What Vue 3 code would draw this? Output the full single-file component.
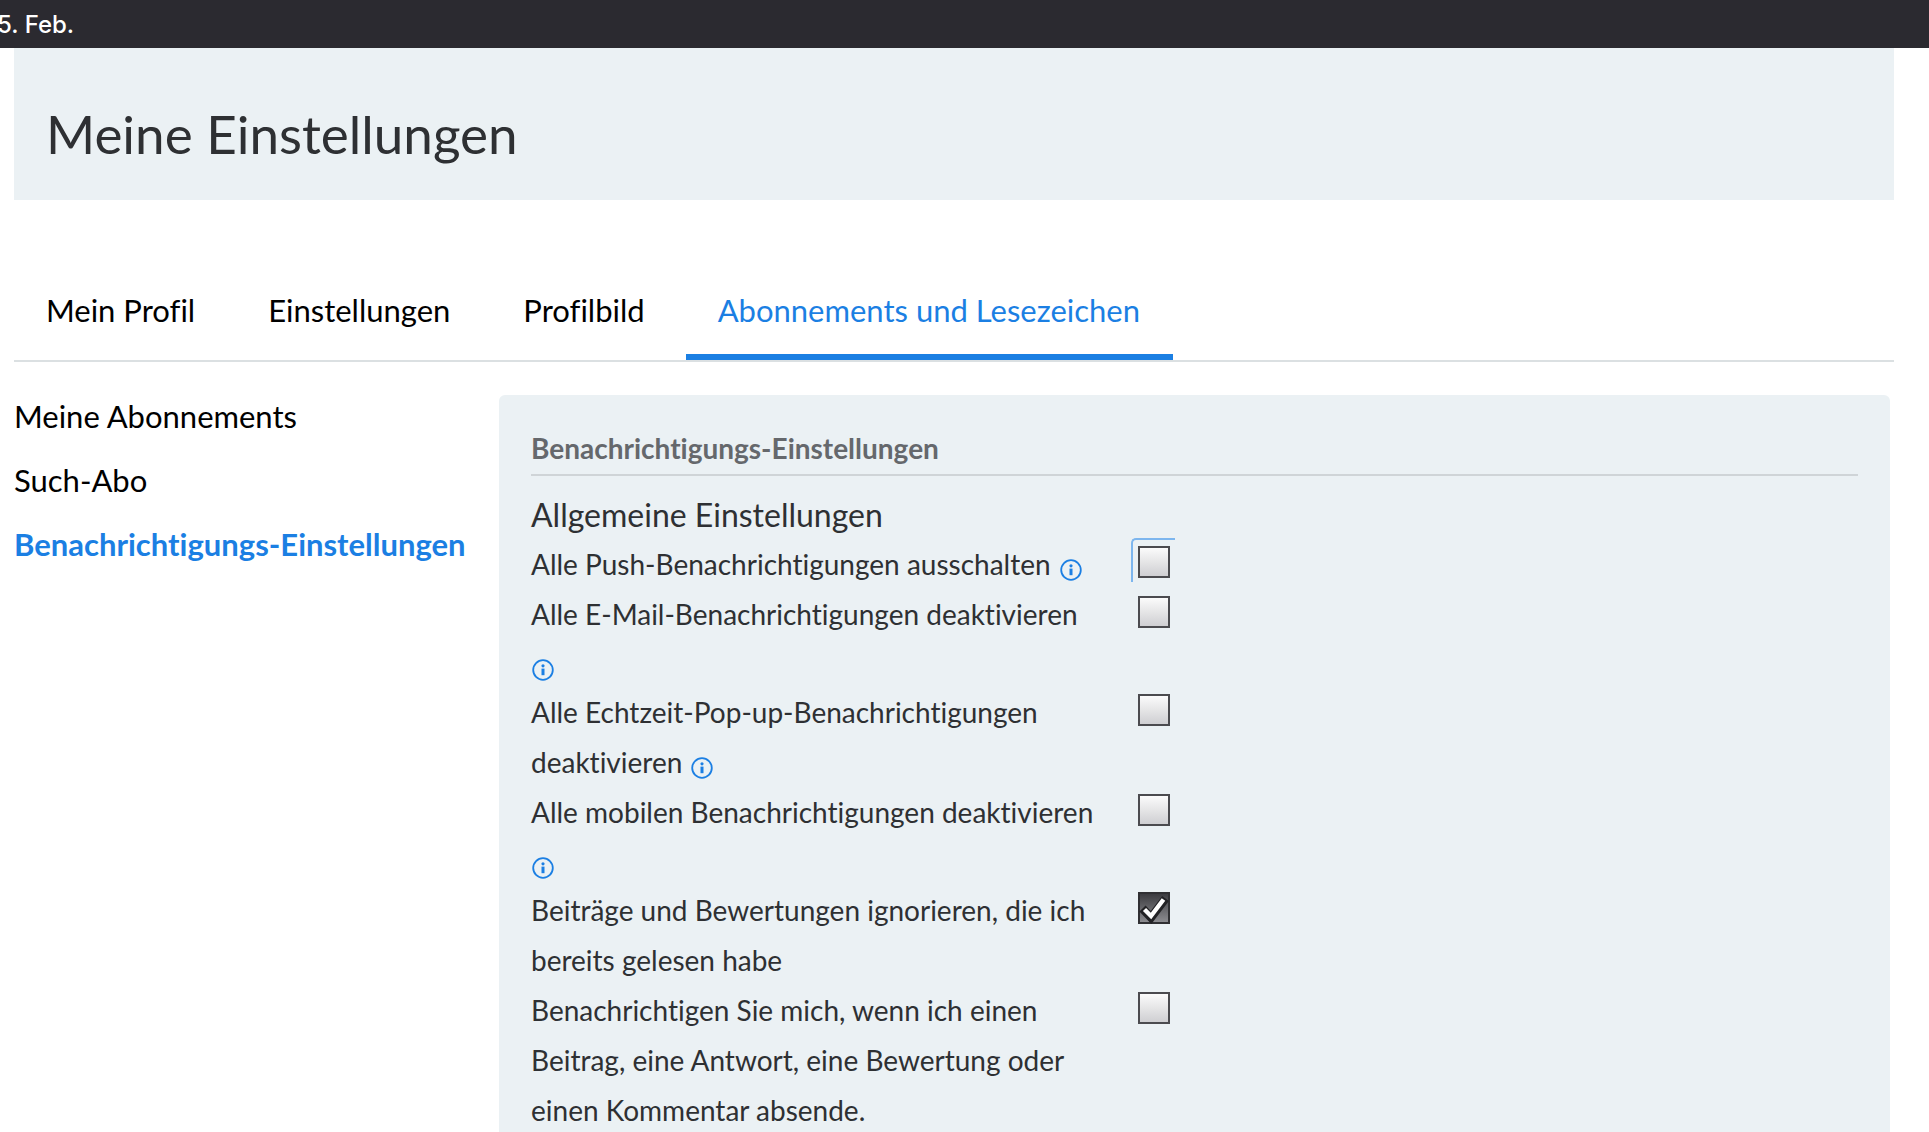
<script setup>
import { ref } from 'vue'

const tabs = [
  { label: 'Mein Profil' },
  { label: 'Einstellungen' },
  { label: 'Profilbild' },
  { label: 'Abonnements und Lesezeichen', active: true },
]

const links = [
  { label: 'Meine Abonnements' },
  { label: 'Such-Abo' },
  { label: 'Benachrichtigungs-Einstellungen', active: true },
]

const options = ref([
  { id: 'push', lines: ['Alle Push-Benachrichtigungen ausschalten'], info: true, checked: false, focused: true },
  { id: 'mail', lines: ['Alle E-Mail-Benachrichtigungen deaktivieren'], infoBelow: true, checked: false },
  { id: 'popup', lines: ['Alle Echtzeit-Pop-up-Benachrichtigungen', 'deaktivieren'], info: true, checked: false },
  { id: 'mobile', lines: ['Alle mobilen Benachrichtigungen deaktivieren'], infoBelow: true, checked: false },
  { id: 'ignore', lines: ['Beiträge und Bewertungen ignorieren, die ich', 'bereits gelesen habe'], checked: true },
  { id: 'own', lines: ['Benachrichtigen Sie mich, wenn ich einen', 'Beitrag, eine Antwort, eine Bewertung oder', 'einen Kommentar absende.'], checked: false },
])
</script>

<template>
  <div class="page">
    <div class="topbar"><span class="date">5. Feb.</span></div>
    <div class="content">
      <header class="title-box"><h1>Meine Einstellungen</h1></header>

      <nav class="tabs">
        <a v-for="tab in tabs" :key="tab.label" href="#" class="tab" :class="{ active: tab.active }">{{ tab.label }}</a>
      </nav>

      <div class="columns">
        <nav class="side">
          <a v-for="link in links" :key="link.label" href="#" :class="{ active: link.active }">{{ link.label }}</a>
        </nav>

        <main class="panel">
          <h2>Benachrichtigungs-Einstellungen</h2>
          <h3>Allgemeine Einstellungen</h3>
          <div v-for="o in options" :key="o.id" class="row">
            <div class="text" :class="{ stacked: o.infoBelow }">
              <label :for="o.id"><template v-for="(line, i) in o.lines" :key="i"><br v-if="i">{{ line }}</template></label>
              <button v-if="o.info || o.infoBelow" type="button" class="info" aria-label="Info">
                <svg viewBox="0 0 22 22" width="22" height="22">
                  <circle cx="11" cy="11" r="9.8" fill="none" stroke="#1b7fe3" stroke-width="1.8" />
                  <circle cx="11" cy="6.8" r="1.6" fill="#1b7fe3" />
                  <path d="M9.5 9.6h3v6.6h-3z" fill="#1b7fe3" />
                </svg>
              </button>
            </div>
            <span class="box" :class="{ focused: o.focused }">
              <input :id="o.id" v-model="o.checked" type="checkbox">
              <svg v-if="o.checked" class="mark" viewBox="0 0 32 32" width="32" height="32">
                <path d="M4.5 16.5 L13 25.5 L27.5 6.5" fill="none" stroke="#222225" stroke-width="8.5" />
                <path d="M6.5 17.5 L13 24 L25.5 7.5" fill="none" stroke="#ffffff" stroke-width="4.4" />
              </svg>
            </span>
          </div>
        </main>
      </div>
    </div>
  </div>
</template>

<style>
html, body { margin: 0; background: #fff; }
</style>

<style scoped>
.page {
  height: 100vh;
  overflow: hidden;
  color: #2e3033;
  font-family: Lato, "Open Sans", sans-serif;
  font-variant-ligatures: no-common-ligatures;
}
.topbar {
  height: 48px;
  overflow: hidden;
  background: #2b2a30;
  color: #fff;
  font: 500 24px/50px Inter, sans-serif;
}
.date { margin-left: -3px; }
.content { margin: 0 35px 0 14px; }
.title-box {
  height: 152px;
  padding: 0 32px;
  background: #ebf1f4;
}
h1 {
  margin: 0;
  padding-top: 52px;
  font-size: 53px;
  line-height: 68px;
  font-weight: 400;
}
.tabs {
  display: flex;
  gap: 8px;
  margin-top: 80px;
  border-bottom: 2px solid #dbe0e2;
}
.tab {
  height: 74px;
  padding: 0 33px 0 32px;
  border-bottom: 6px solid transparent;
  color: #000;
  font-size: 31px;
  line-height: 60px;
  text-decoration: none;
}
.tab.active { color: #1b7fe3; border-color: #1b7fe3; }
.columns {
  display: grid;
  grid-template-columns: 485px 1fr;
  padding: 33px 4px 0 0;
}
.side {
  display: flex;
  flex-direction: column;
  margin-top: -11px;
}
.side a {
  color: #000;
  font-size: 31px;
  line-height: 64px;
  text-decoration: none;
  white-space: nowrap;
}
.side .active { color: #1b7fe3; font-weight: 700; }
.panel {
  min-height: 800px;
  padding: 32px;
  border-radius: 6px;
  background: #ebf1f4;
}
h2 {
  margin: 0;
  border-bottom: 2px solid #cfd4d7;
  color: #65686c;
  font-size: 28px;
  line-height: 43px;
  font-weight: 700;
  padding-bottom: 4px;
}
h3 {
  margin: 0;
  padding: 15px 0 1px;
  font-size: 32px;
  line-height: 48px;
  font-weight: 400;
}
.row {
  display: grid;
  grid-template-columns: 607px 1fr;
  font-size: 28px;
  line-height: 50px;
}
.text { margin: -1px 0 1px; white-space: nowrap; }
.info {
  width: 22px;
  height: 22px;
  margin-left: 9px;
  padding: 0;
  border: 0;
  background: none;
  vertical-align: -6px;
}
.info svg { display: block; }
.stacked { display: flex; flex-direction: column; height: 98px; }
.stacked .info { margin: 20px 0 0 1px; }
.box {
  position: relative;
  width: 32px;
  height: 32px;
  margin-top: 6px;
}
.box input {
  appearance: none;
  display: block;
  box-sizing: border-box;
  width: 32px;
  height: 32px;
  margin: 0;
  border: 2px solid #4b4b4f;
  background: linear-gradient(#fbfbfb, #cfcfd2);
}
.box input:checked {
  border-color: #303033;
  background: linear-gradient(#3c3c40, #8c8c90);
}
.mark {
  position: absolute;
  inset: 0;
  pointer-events: none;
}
.focused::before {
  content: "";
  position: absolute;
  left: -7px;
  top: -8px;
  width: 42px;
  height: 42px;
  border-top: 2px solid #7db6ee;
  border-left: 2px solid #7db6ee;
  border-top-left-radius: 5px;
}
</style>
